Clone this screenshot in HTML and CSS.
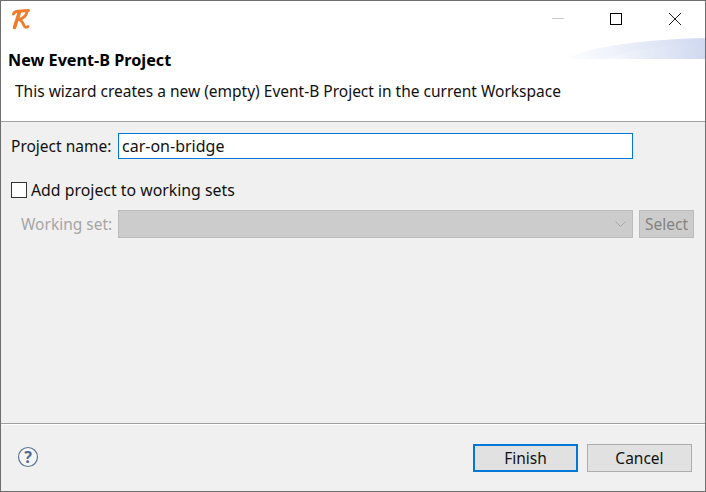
FILE: index.html
```html
<!DOCTYPE html>
<html lang="en">
<head>
<meta charset="utf-8">
<title>New Event-B Project</title>
<link rel="stylesheet" href="styles.css">
</head>
<body>
<div class="window">
  <header class="titlebar">
    <svg class="app-icon" width="20" height="22" viewBox="0 0 20 22" fill="none" stroke="#ee7d2c" stroke-linecap="round" stroke-linejoin="round">
      <path d="M2.500 5C3 3 4.500 2.500 7 2.200L17.500 1.500" stroke-width="3"/>
      <path d="M8.500 3L3.500 18.500" stroke-width="3.600"/>
      <path d="M15.500 2.500C16.500 5.500 12.500 9.500 8 10.500C11 11.500 12 14 13 16.500C13.500 18.500 15 18.800 17 17.500" stroke-width="2.800"/>
    </svg>
    <div class="window-controls">
      <svg class="ctl" width="58" height="37" viewBox="0 0 58 37"><path d="M22 17.500H34" stroke="#c8c8c8" fill="none"/></svg>
      <svg class="ctl" width="58" height="37" viewBox="0 0 58 37"><rect x="22.500" y="12.500" width="11" height="11" fill="none" stroke="#000"/></svg>
      <svg class="ctl" width="58" height="37" viewBox="0 0 58 37"><path d="M23 12L35 24M35 12L23 24" stroke="#222" fill="none"/></svg>
    </div>
  </header>
  <section class="banner">
    <h1 class="banner-title">New Event-B Project</h1>
    <p class="banner-text">This wizard creates a new (empty) Event-B Project in the current Workspace</p>
    <svg class="banner-art" width="141" height="21" viewBox="0 0 141 21">
      <defs><linearGradient id="fade" x1="0" x2="1" y1="0" y2="0"><stop offset="0" stop-color="#ffffff"/><stop offset="1" stop-color="#cfd9f0"/></linearGradient></defs>
      <path d="M0 21C25 8 85 1 141 0V21Z" fill="url(#fade)"/>
      <path d="M40 21C60 13 100 7 141 6V21Z" fill="url(#fade)" opacity=".45"/>
    </svg>
  </section>
  <main class="content">
    <div class="row name-row">
      <label class="label name-label" for="project-name">Project name:</label>
      <input class="text-input" id="project-name" type="text" value="car-on-bridge">
    </div>
    <div class="check-row">
      <span class="checkbox"></span>
      <span class="label check-label">Add project to working sets</span>
    </div>
    <div class="row set-row">
      <span class="label disabled-label">Working set:</span>
      <div class="combo">
        <svg width="11" height="6" viewBox="0 0 11 6"><path d="M.5 .5L5.500 5.500L10.500 .5" fill="none" stroke="#a8a8a8"/></svg>
      </div>
      <span class="select-btn">Select</span>
    </div>
  </main>
  <footer class="footer">
    <svg class="help" width="22" height="22" viewBox="0 0 22 22" fill="none">
      <circle cx="11" cy="11" r="9.500" stroke="#5f7696" stroke-width="1.200" fill="#f4f5f7"/>
      <text x="11" y="16.500" text-anchor="middle" class="help-mark">?</text>
    </svg>
    <div class="buttons">
      <button class="btn btn-default" type="button">Finish</button>
      <button class="btn" type="button">Cancel</button>
    </div>
  </footer>
</div>
</body>
</html>
```
FILE: styles.css
```css
* { box-sizing: border-box; }
html, body { margin: 0; padding: 0; }
body {
  width: 706px;
  height: 492px;
  overflow: hidden;
  font-family: "Noto Sans", "Open Sans", sans-serif;
  font-size: 15.500px;
  color: #111;
}
.window {
  width: 706px;
  height: 492px;
  display: flex;
  flex-direction: column;
  border: 1px solid #6e6e6e;
  background: #f0f0f0;
}
.titlebar {
  height: 37px;
  display: flex;
  align-items: flex-start;
  justify-content: space-between;
  background: #fff;
}
.app-icon { margin: 8px 0 0 10px; }
.window-controls { display: flex; margin-right: 1px; }
.ctl { display: block; }
.banner {
  position: relative;
  height: 84px;
  background: #fff;
  border-bottom: 1px solid #a0a0a0;
  padding: 11px 0 0 7px;
}
.banner-title {
  margin: 0;
  font-size: 16.200px;
  line-height: 22px;
  font-weight: 700;
  color: #000;
}
.banner-text {
  margin: 9px 0 0 7px;
  font-size: 15.500px;
  line-height: 22px;
}
.banner-art { position: absolute; right: 0; top: 0; display: block; }
.content {
  flex: 1;
  padding: 11px 10px 0 10px;
}
.row { display: flex; align-items: center; }
.name-row { height: 26px; }
.label { white-space: nowrap; line-height: 22px; }
.name-label { width: 107px; }
.text-input {
  width: 515px;
  height: 26px;
  border: 1px solid #0078d7;
  background: #fff;
  padding: 0 3px;
  margin: 0;
  font: inherit;
  font-size: 16px;
  color: #111;
  outline: none;
}
.check-row {
  display: flex;
  align-items: center;
  gap: 4px;
  margin-top: 20px;
  height: 22px;
}
.check-label { font-size: 15.850px; }
.checkbox {
  width: 16px;
  height: 16px;
  border: 1px solid #333;
  background: #fff;
}
.set-row {
  margin-top: 9px;
  height: 28px;
  padding-left: 10px;
}
.disabled-label { color: #a6a6a6; width: 97px; }
.combo {
  width: 515px;
  height: 28px;
  background: #cccccc;
  border: 1px solid #bcbcbc;
  display: flex;
  align-items: center;
  justify-content: flex-end;
  padding-right: 6px;
}
.select-btn {
  width: 55px;
  height: 28px;
  margin-left: 6px;
  background: #cccccc;
  border: 1px solid #bcbcbc;
  color: #838383;
  text-align: center;
  line-height: 26px;
}
.footer {
  height: 68px;
  border-top: 1px solid #a0a0a0;
  box-shadow: inset 0 1px 0 #fff;
  display: flex;
  justify-content: space-between;
  padding: 20px 13px 0 16px;
}
.help { display: block; margin-top: 2px; }
.help-mark {
  font-family: "Noto Sans", sans-serif;
  font-size: 16px;
  font-weight: 700;
  fill: #4d6a92;
}
.buttons { display: flex; gap: 9px; }
.btn {
  width: 105px;
  height: 28px;
  margin: 0;
  padding: 0;
  background: #e1e1e1;
  border: 1px solid #adadad;
  font: inherit;
  color: #111;
}
.btn-default { border: 2px solid #0078d7; }
```
